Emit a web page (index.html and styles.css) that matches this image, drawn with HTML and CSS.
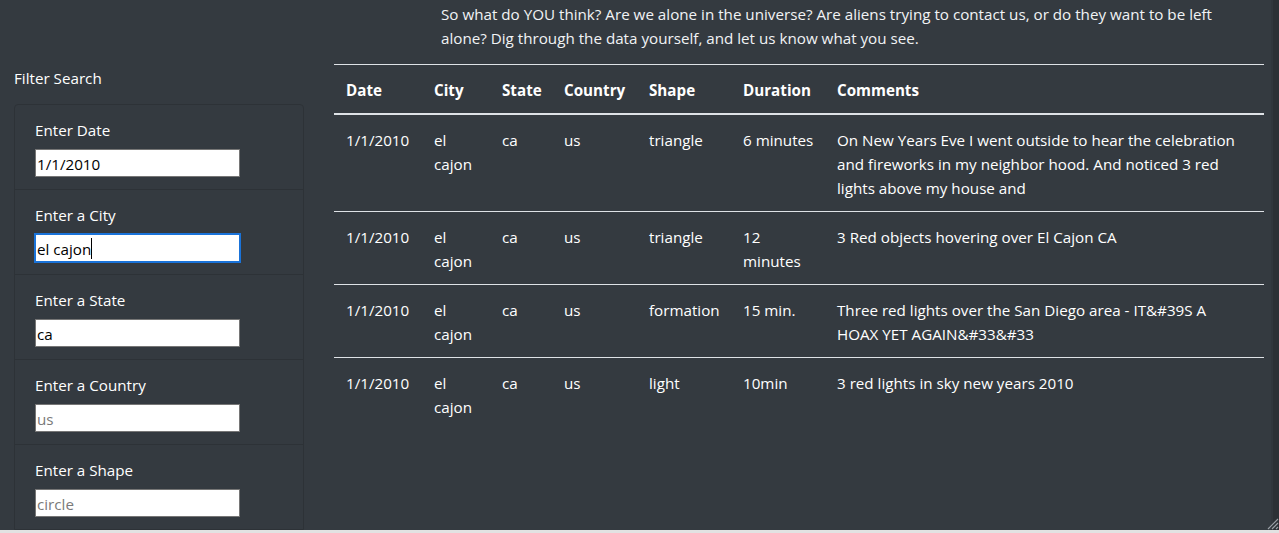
FILE: index.html
```html
<!DOCTYPE html>
<html lang="en">
<head>
<meta charset="utf-8">
<title>UFO Sightings</title>
<link rel="stylesheet" href="styles.css">
</head>
<body>
<div class="window">
  <div class="viewport">
    <div class="page">
      <aside class="sidebar">
        <h2 class="filter-title">Filter Search</h2>
        <ul class="filters">
          <li class="filter-item">
            <label class="filter-label" for="datetime">Enter Date</label>
            <input class="filter-input" id="datetime" type="text" value="1/1/2010">
          </li>
          <li class="filter-item">
            <label class="filter-label" for="city">Enter a City</label>
            <span class="input-wrap">
              <input class="filter-input focused" id="city" type="text" value="el cajon">
              <span class="caret"></span>
            </span>
          </li>
          <li class="filter-item">
            <label class="filter-label" for="state">Enter a State</label>
            <input class="filter-input" id="state" type="text" value="ca">
          </li>
          <li class="filter-item">
            <label class="filter-label" for="country">Enter a Country</label>
            <input class="filter-input" id="country" type="text" placeholder="us">
          </li>
          <li class="filter-item">
            <label class="filter-label" for="shape">Enter a Shape</label>
            <input class="filter-input" id="shape" type="text" placeholder="circle">
          </li>
        </ul>
      </aside>
      <main class="content">
        <p class="intro">So what do YOU think? Are we alone in the universe? Are aliens trying to contact us, or do they want to be left alone? Dig through the data yourself, and let us know what you see.</p>
        <table class="ufo-table">
          <colgroup>
            <col class="c-date"><col class="c-city"><col class="c-state"><col class="c-country"><col class="c-shape"><col class="c-duration"><col class="c-comments">
          </colgroup>
          <thead>
            <tr><th>Date</th><th>City</th><th>State</th><th>Country</th><th>Shape</th><th>Duration</th><th>Comments</th></tr>
          </thead>
          <tbody>
            <tr><td>1/1/2010</td><td>el cajon</td><td>ca</td><td>us</td><td>triangle</td><td class="duration">6 minutes</td><td class="comments">On New Years Eve I went outside to hear the celebration and fireworks in my neighbor hood. And noticed 3 red lights above my house and</td></tr>
            <tr><td>1/1/2010</td><td>el cajon</td><td>ca</td><td>us</td><td>triangle</td><td class="duration">12 minutes</td><td class="comments">3 Red objects hovering over El Cajon CA</td></tr>
            <tr><td>1/1/2010</td><td>el cajon</td><td>ca</td><td>us</td><td>formation</td><td class="duration">15 min.</td><td class="comments">Three red lights over the San Diego area - IT&amp;#39S A HOAX YET AGAIN&amp;#33&amp;#33</td></tr>
            <tr><td>1/1/2010</td><td>el cajon</td><td>ca</td><td>us</td><td>light</td><td class="duration">10min</td><td class="comments">3 red lights in sky new years 2010</td></tr>
          </tbody>
        </table>
      </main>
    </div>
    <div class="vscroll"><div class="vscroll-edge"></div></div>
  </div>
  <div class="hbar"></div>
  <svg class="grip" width="14" height="14" viewBox="0 0 14 14" aria-hidden="true">
    <path d="M13 3 L3 13 M13 7 L7 13 M13 11 L11 13" stroke="#9aa0a6" stroke-width="1.2" fill="none"/>
  </svg>
</div>
</body>
</html>
```
FILE: styles.css
```css
* { box-sizing: border-box; }
html, body { margin: 0; padding: 0; }
body {
  background: #343a40;
  font-family: "Open Sans", "Noto Sans", sans-serif;
  font-size: 15.2px;
  line-height: 24px;
  color: #fff;
  overflow: hidden;
}
.window {
  position: relative;
  width: 1279px;
  height: 533px;
  display: flex;
  flex-direction: column;
}
.viewport {
  display: flex;
  height: 530px;
  overflow: hidden;
}
.page {
  flex: 1;
  display: flex;
  background: #343a40;
}
.vscroll {
  width: 8px;
  background: #2c3035;
  display: flex;
}
.vscroll-edge { width: 2px; background: #31363c; }
.hbar { height: 3px; background: #e2e2e2; }
.grip { position: absolute; right: 0; bottom: 3px; }

.sidebar {
  width: 334px;
  flex: none;
  padding: 66px 0 0 14px;
}
.filter-title {
  margin: 0 0 14px;
  font-size: 15.2px;
  font-weight: 400;
  line-height: 24px;
}
.filters {
  list-style: none;
  margin: 0;
  padding: 0;
  width: 290px;
  border: 1px solid #2d3237;
  border-radius: 4px 4px 0 0;
}
.filter-item {
  padding: 12px 20px;
  border-top: 1px solid #2d3237;
}
.filter-item:first-child { border-top: 0; }
.filter-label {
  display: block;
  padding-top: 1px;
  margin-bottom: 7px;
  line-height: 24px;
}
.input-wrap { position: relative; display: block; width: 205px; }
.filter-input {
  display: block;
  width: 205px;
  height: 28px;
  margin: 0;
  padding: 2px 1px 0;
  border: 1px solid #767676;
  background: #fff;
  color: #000;
  font-family: "Open Sans", "Noto Sans", sans-serif;
  font-size: 15.2px;
  outline: none;
}
.filter-input::placeholder { color: #7a7a7a; }
.filter-input.focused {
  border-color: #1a73d9;
  outline: 1px solid #1a73d9;
}
.caret {
  position: absolute;
  left: 56px;
  top: 4px;
  width: 1px;
  height: 21px;
  background: #000;
}

.content {
  flex: 1;
  padding-top: 2px;
}
.intro {
  margin: 0 0 14px 107px;
  width: 800px;
  color: #f1f3f5;
}
.ufo-table {
  width: 930px;
  table-layout: fixed;
  border-collapse: collapse;
}
.c-date { width: 88px; }
.c-city { width: 68px; }
.c-state { width: 62px; }
.c-country { width: 85px; }
.c-shape { width: 94px; }
.c-duration { width: 94px; }
.c-comments { width: 439px; }
.ufo-table th,
.ufo-table td {
  padding: 13px 12px 11px;
  text-align: left;
  vertical-align: top;
  border-top: 1px solid #dee2e6;
}
.ufo-table th {
  font-weight: 700;
  border-bottom: 2px solid #dee2e6;
}
.ufo-table td { font-weight: 400; }
.ufo-table td.duration { padding-right: 7px; }
.ufo-table td.comments { padding-right: 16px; }
```
